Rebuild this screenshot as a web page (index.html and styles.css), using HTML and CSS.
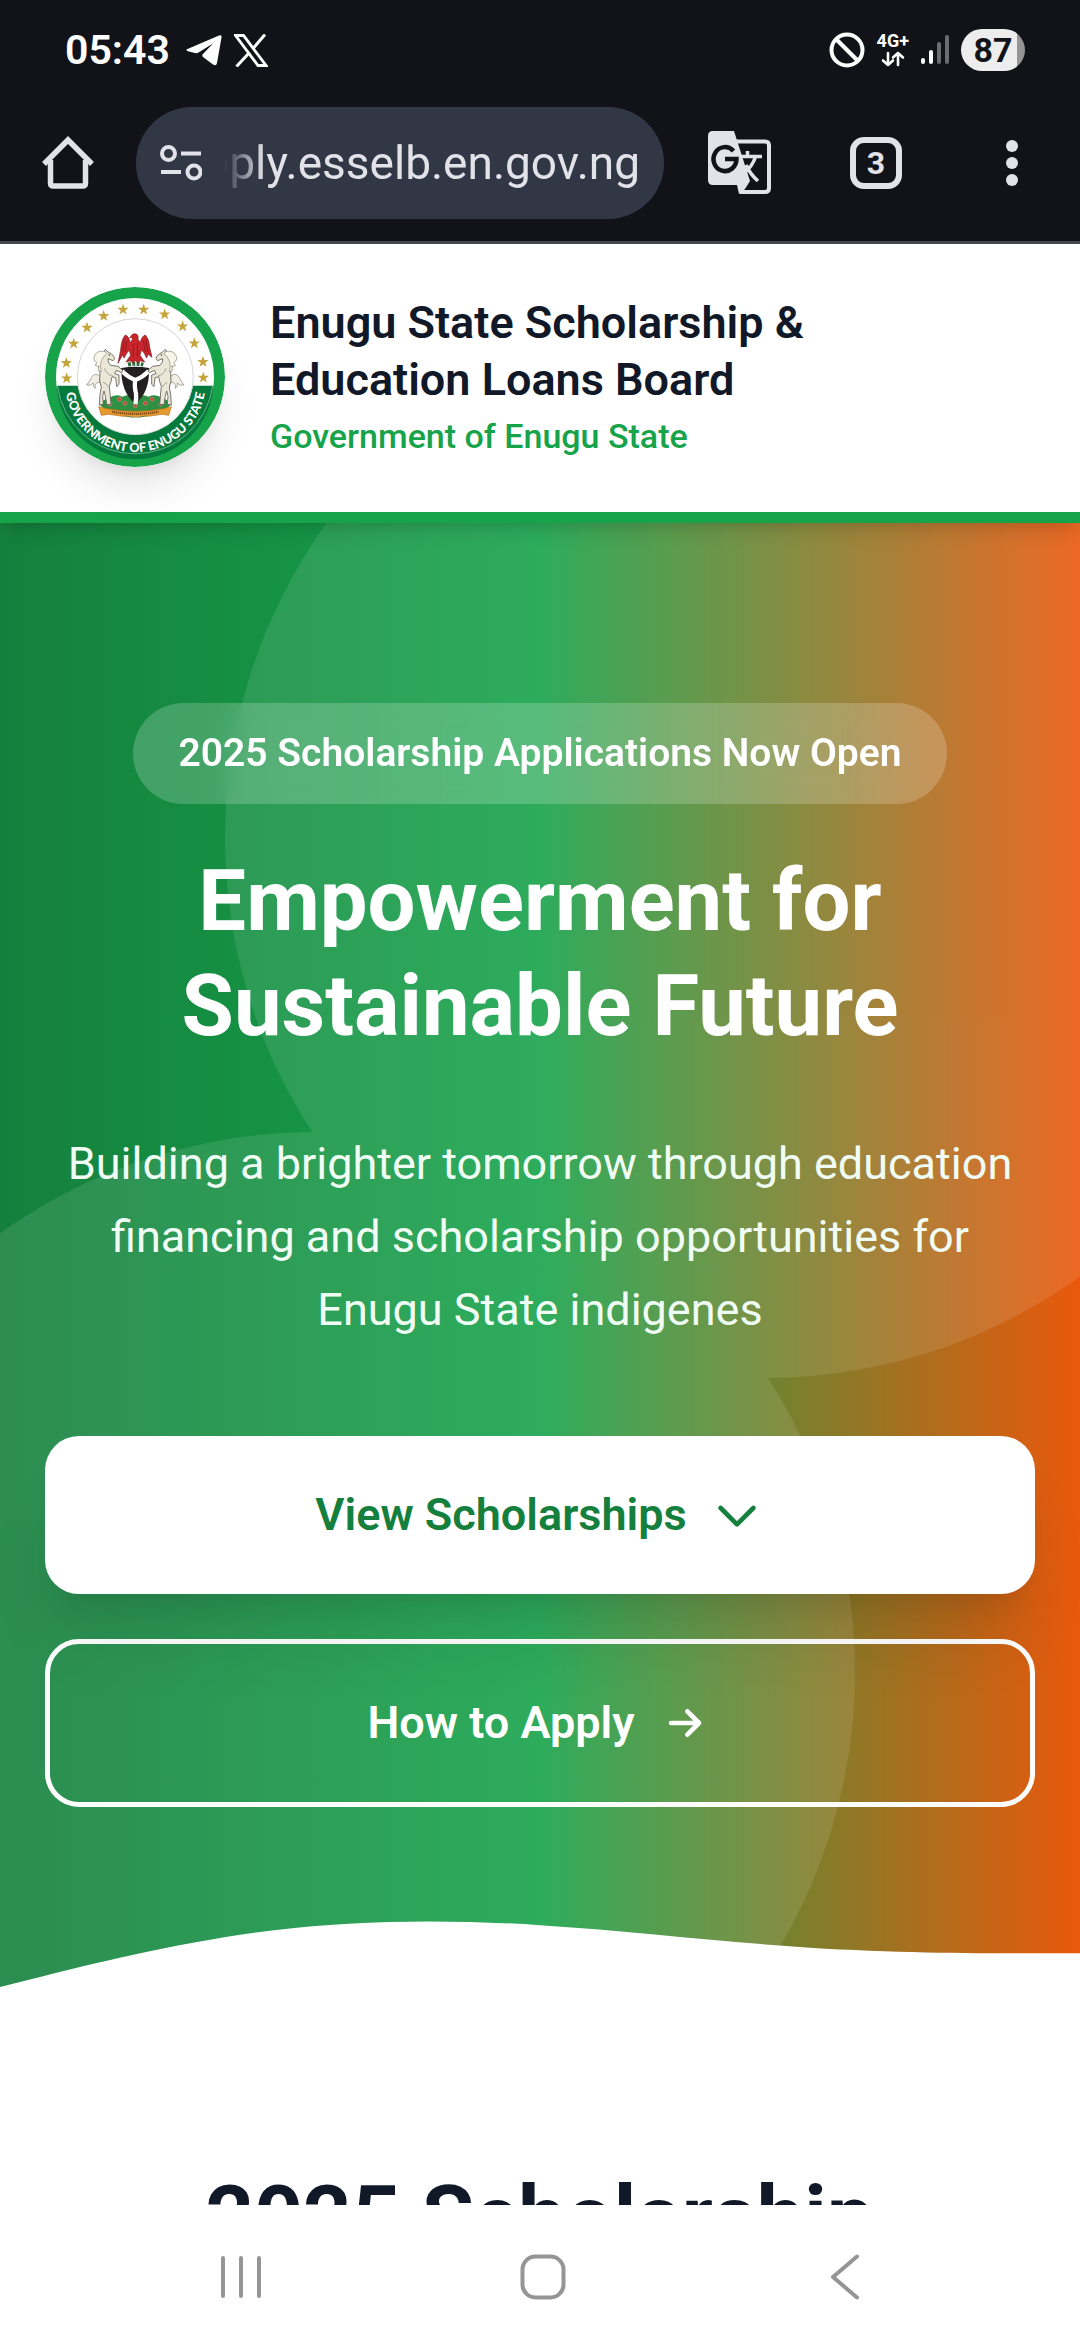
FILE: index.html
```html
<!DOCTYPE html>
<html lang="en">
<head>
    <title>Enugu State Scholarship &amp; Education Loans Board</title>
    <meta charset="utf-8">
    <meta name="viewport" content="width=device-width, initial-scale=1">

    <link rel="stylesheet" href="styles.css">
</head>

<body>

    <!-- Status bar -->
    <div class="status-bar">
        <div class="status-left">
            <span class="clock">05:43</span>
            <svg class="telegram" viewBox="0 0 36 32" width="36" height="32">
                <path d="M1.500 15 33 1.500Q36 .5 35.500 3.500L31 29Q30.200 32.500 27 30.500L17 23Q15.500 21.500 17 20L27 9.500 12.500 18.500Q11 19.500 9 19L2 17.200Q-1 16 1.500 15Z" fill="#fff"/>
            </svg>
            <svg viewBox="0 0 34 33" width="34" height="33">
                <path d="M1.500 1.500H9.500L32 31.500H24Z" fill="none" stroke="#fff" stroke-width="2.800"/>
                <path d="M31 .5 19 14.500M15.500 18.500 2.500 32.500" fill="none" stroke="#fff" stroke-width="3"/>
            </svg>
        </div>
        <div class="status-right">
            <svg viewBox="0 0 36 36" width="36" height="36" fill="none" stroke="#fff" stroke-width="4">
                <circle cx="18" cy="18" r="15.500"/>
                <path d="M7 7 29 29"/>
            </svg>
            <div class="network">
                <span>4G+</span>
                <svg viewBox="0 0 26 16" width="26" height="16" fill="none" stroke="#fff" stroke-width="2.600" stroke-linecap="round" stroke-linejoin="round">
                    <path d="M8 2V14M3 9.500 8 14 13 9.500M18 14V2M13 6.500 18 2 23 6.500"/>
                </svg>
            </div>
            <svg viewBox="0 0 28 30" width="28" height="30" stroke-width="4" stroke-linecap="round">
                <path d="M2 25V27M10 17V27" stroke="#fff"/>
                <path d="M18 9V27M26 2V27" stroke="#6c6d71"/>
            </svg>
            <span class="battery">87</span>
        </div>
    </div>

    <!-- Browser toolbar -->
    <div class="toolbar">
        <button class="tool home" aria-label="Home">
            <svg viewBox="0 0 52 54" width="52" height="54" fill="none" stroke="#e2e2e9" stroke-width="5.500" stroke-linejoin="round">
                <path d="M2 28 26 4 50 28" stroke-linejoin="miter"/>
                <path d="M8.500 24V47Q8.500 50 11.500 50H40.500Q43.500 50 43.500 47V24"/>
            </svg>
        </button>
        <div class="address">
            <svg viewBox="0 0 42 38" width="42" height="38" fill="none" stroke="#e2e2e9" stroke-width="4">
                <circle cx="8.500" cy="9.500" r="6.500"/>
                <circle cx="34" cy="28" r="6.500"/>
                <path d="M21 9.500H41M1 28H21"/>
            </svg>
            <input type="text" class="url" aria-label="Address" value="apply.esselb.en.gov.ng">
        </div>
        <button class="tool" aria-label="Translate">
            <svg viewBox="0 0 64 64" width="64" height="64">
                <path d="M28 10.500H57Q61 10.500 61 14.500V57Q61 61 57 61H32" fill="none" stroke="#e2e2e9" stroke-width="4"/>
                <path d="M5 0H26L42 50 37 58 31 63 29 54H5Q0 54 0 49V5Q0 0 5 0Z" fill="#e2e2e9"/>
                <path d="M25.500 20A11.500 12 0 1 0 28.500 28H17" fill="none" stroke="#121318" stroke-width="4.500"/>
                <path d="M39.500 20V25M32 25.500H54M47.500 26Q44 36 36 42M38 34Q42 43 50 50" fill="none" stroke="#e2e2e9" stroke-width="3.500"/>
            </svg>
        </button>
        <button class="tool" aria-label="Open tabs"><span class="tab-count">3</span></button>
        <button class="tool" aria-label="Menu">
            <svg viewBox="0 0 12 48" width="12" height="48" fill="#e2e2e9">
                <circle cx="6" cy="7" r="6"/>
                <circle cx="6" cy="24" r="6"/>
                <circle cx="6" cy="41" r="6"/>
            </svg>
        </button>
    </div>

    <!-- Web page -->
    <div class="page">
        <header class="site-header">
            <svg class="logo" viewBox="45 51 540 540" role="img" aria-label="Government of Enugu State">
                <defs>
                    <path id="ring" d="M105 335A211 211 0 0 0 527 335"/>
                    <path id="star" d="M0-18 4.200-5.800 17.100-5.600 6.800 2.200 10.600 14.600 0 7.200-10.600 14.600-6.800 2.200-17.100-5.600-4.200-5.800Z"/>
                    <g id="horse" transform="translate(150 165)">
                        <path d="M60 152Q42 142 34 158 30 168 20 180 32 184 40 174 38 186 46 190 42 172 60 172Z" fill="#f1eee3" stroke="#8b8778" stroke-width="2"/>
                        <path d="M72 82Q74 76 76 73L84 81Q96 86 101 94L104 101 99 107 84 101Q82 112 92 121L114 124 128 136 124 143 109 136 104 146 117 150 117 178 110 185 107 158 96 155Q94 170 88 184L90 204 93 238 80 239 76 212 72 198 68 214 70 238 58 240 60 208 64 186Q56 170 60 148 62 132 52 118 46 94 72 82Z" fill="#eae6d8" stroke="#5f5c52" stroke-width="2.500" stroke-linejoin="round"/>
                        <path d="M76 80Q52 74 44 92 38 106 50 112L46 122 57 124 54 136 64 140Q58 118 66 104 70 92 80 88Z" fill="#f8f5ea" stroke="#8b8778" stroke-width="2"/>
                        <circle cx="88" cy="90" r="2.500" fill="#444"/>
                        <path d="M74 130Q80 150 98 152M70 172Q80 176 86 186" fill="none" stroke="#aaa491" stroke-width="3"/>
                    </g>
                </defs>
                <circle cx="315" cy="321" r="270" fill="#16a34a"/>
                <circle cx="315" cy="321" r="237" fill="#fff"/>
                <path d="M79.500 347H550.500A236 236 0 0 1 79.500 347Z" fill="#047a3c"/>
                <path d="M82 347A235 235 0 0 0 548 347" fill="none" stroke="#9ad1b0" stroke-width="2"/>
                <circle cx="316" cy="320" r="174" fill="#fff" stroke="#d5d5d5" stroke-width="3"/>
                <g fill="#c5a43c">
                    <use href="#star" x="110" y="325"/>
                    <use href="#star" x="109" y="279"/>
                    <use href="#star" x="131" y="221"/>
                    <use href="#star" x="171" y="173"/>
                    <use href="#star" x="221" y="138"/>
                    <use href="#star" x="279" y="119"/>
                    <use href="#star" x="341" y="119"/>
                    <use href="#star" x="404" y="133"/>
                    <use href="#star" x="458" y="169"/>
                    <use href="#star" x="493" y="220"/>
                    <use href="#star" x="519" y="276"/>
                    <use href="#star" x="520" y="323"/>
                </g>
                <text class="logo-text"><textPath href="#ring" startOffset="50%">GOVERNMENT OF ENUGU STATE</textPath></text>

                <!-- Coat of arms -->
                <path d="M209 404Q215 390 236 384 258 370 276 380 316 366 356 380 376 370 396 384 418 390 423 404L400 424Q316 450 232 424Z" fill="#2f8f43"/>
                <path d="M206 410 232 416Q316 432 400 416L424 410 416 436 396 433Q316 448 236 433L214 436Z" fill="#e79a2c" stroke="#b86d1b" stroke-width="2"/>
                <path d="M246 425Q316 438 386 425" fill="none" stroke="#8a4d16" stroke-width="7" stroke-dasharray="4 2"/>
                <path d="M284 436Q316 448 350 436L340 441Q316 444 294 441Z" fill="#2f8f43"/>
                <g fill="#c9463c" stroke="#f0c9a0" stroke-width="1">
                    <circle cx="240" cy="402" r="6"/>
                    <circle cx="268" cy="388" r="6"/>
                    <circle cx="284" cy="400" r="6"/>
                    <circle cx="316" cy="408" r="5"/>
                    <circle cx="346" cy="400" r="6"/>
                    <circle cx="366" cy="388" r="6"/>
                    <circle cx="392" cy="402" r="6"/>
                </g>
                <path d="M274 294Q316 286 357 294 360 366 316 402 272 366 274 294Z" fill="#211f20"/>
                <path d="M276 303Q294 322 316 330 338 322 356 303M316 326Q312 350 318 370 320 386 316 402" fill="none" stroke="#fff" stroke-width="13"/>
                <use href="#horse"/>
                <use href="#horse" transform="translate(632 0) scale(-1 1)"/>
                <path d="M294 284Q316 278 340 284" fill="none" stroke="#2f6b3d" stroke-width="12" stroke-dasharray="9 4"/>
                <path d="M306 194Q314 188 322 194 326 200 324 208L331 218Q334 200 346 195 358 208 359 232L366 262 354 252 350 264 342 248 334 240 330 256 344 276 332 272 324 278 316 272 308 278 300 272 288 276 302 256 298 240 290 250 282 264 278 254 264 280 272 240Q274 208 286 195 298 200 300 218L308 208 304 202 299 204Z" fill="#c9252c" stroke="#7d1519" stroke-width="2"/>
                <path d="M284 208 278 246M291 212 286 246M347 208 354 246M340 212 346 246M310 220V262M322 220V262" fill="none" stroke="#7d1519" stroke-width="2"/>
            </svg>
            <div class="brand">
                <p class="brand-name">Enugu State Scholarship &amp;<br>Education Loans Board</p>
                <p class="brand-sub">Government of Enugu State</p>
            </div>
        </header>

        <section class="hero">
            <div class="circles">
                <div class="circle circle-top"></div>
                <div class="circle circle-bottom"></div>
            </div>
            <div class="hero-content">
                <span class="badge">2025 Scholarship Applications Now Open</span>
                <h1>Empowerment for Sustainable Future</h1>
                <p class="lead">Building a brighter tomorrow through education financing and scholarship opportunities for Enugu State indigenes</p>
                <a href="#scholarships" class="btn btn-white">
                    View Scholarships
                    <svg viewBox="0 0 24 24" width="56" height="56" fill="none" stroke="currentColor" stroke-width="2" stroke-linecap="round" stroke-linejoin="round">
                        <path d="M19 9l-7 7-7-7"/>
                    </svg>
                </a>
                <a href="#apply" class="btn btn-outline">
                    How to Apply
                    <svg viewBox="0 0 24 24" width="56" height="56" fill="none" stroke="currentColor" stroke-width="2" stroke-linecap="round" stroke-linejoin="round">
                        <path d="M13 7l5 5m0 0l-5 5m5-5H6"/>
                    </svg>
                </a>
            </div>
            <svg class="wave" viewBox="0 0 1440 120">
                <path d="M0 120L60 105C120 90 240 60 360 45C480 30 600 30 720 37.500C840 45 960 60 1080 67.500C1200 75 1320 75 1380 75L1440 75V120H0Z" fill="#fff"/>
            </svg>
        </section>

        <section class="scholarships" id="scholarships">
            <h2>2025 Scholarship</h2>
        </section>
    </div>

    <!-- System navigation -->
    <nav class="nav-bar">
        <button aria-label="Recent apps">
            <svg viewBox="0 0 42 44" width="42" height="44" stroke="#959595" stroke-width="4" stroke-linecap="round">
                <path d="M3 3V41M21 3V41M39 3V41"/>
            </svg>
        </button>
        <button aria-label="Home screen">
            <svg viewBox="0 0 46 46" width="46" height="46" fill="none" stroke="#959595" stroke-width="4">
                <rect x="2.500" y="2.500" width="41" height="41" rx="13"/>
            </svg>
        </button>
        <button aria-label="Back">
            <svg viewBox="0 0 30 46" width="30" height="46" fill="none" stroke="#959595" stroke-width="4" stroke-linecap="round" stroke-linejoin="round">
                <path d="M27 2.500 3 23 27 43.500"/>
            </svg>
        </button>
    </nav>

</body>
</html>
```

FILE: styles.css
```css
* {
    box-sizing: border-box;
}

body {
    margin: 0;
    height: 100vh;
    display: flex;
    flex-direction: column;
    overflow: hidden;
    font-family: Roboto, sans-serif;
    background-color: white;
}

svg {
    display: block;
    flex-shrink: 0;
}

button {
    border: none;
    padding: 0;
    background: none;
}

h1, h2, p {
    margin: 0;
}

/* Status bar */
.status-bar {
    height: 85px;
    padding: 15px 55px 0 65px;
    display: flex;
    align-items: center;
    justify-content: space-between;
    background-color: #121318;
    color: white;
}

.status-left, .status-right {
    display: flex;
    align-items: center;
    gap: 12px;
}

.clock {
    font-size: 41px;
    font-weight: 600;
    margin-right: 4px;
}

.network {
    display: flex;
    flex-direction: column;
    align-items: center;
    gap: 2px;
    font-size: 18px;
    line-height: 16px;
    font-weight: 700;
}

.battery {
    width: 64px;
    height: 42px;
    border-radius: 21px;
    background: linear-gradient(to right, #ededed 87%, #959595 87%);
    color: #121318;
    font-size: 34px;
    line-height: 42px;
    font-weight: 700;
    text-align: center;
}

/* Browser toolbar */
.toolbar {
    height: 159px;
    display: flex;
    align-items: center;
    background-color: #121318;
    border-bottom: 3px solid #45464f;
}

.tool {
    width: 136px;
    height: 112px;
    display: flex;
    align-items: center;
    justify-content: center;
}

.address {
    flex: 1;
    min-width: 0;
    height: 112px;
    margin-right: 8px;
    padding: 0 24px;
    display: flex;
    align-items: center;
    gap: 22px;
    border-radius: 56px;
    background-color: #323746;
}

.url {
    flex: 1;
    min-width: 0;
    border: none;
    padding: 0;
    outline: none;
    background: none;
    color: #e2e2e9;
    font-family: Roboto, sans-serif;
    font-size: 46px;
    direction: rtl;
    -webkit-mask-image: linear-gradient(to right, transparent, black 40px);
    mask-image: linear-gradient(to right, transparent, black 40px);
}

.tab-count {
    width: 52px;
    height: 52px;
    border: 6px solid #e2e2e9;
    border-radius: 14px;
    color: #e2e2e9;
    font-family: Roboto, sans-serif;
    font-size: 32px;
    line-height: 40px;
    font-weight: 700;
}

/* Web page */
.page {
    flex: 1;
    min-height: 0;
    overflow: hidden;
}

.site-header {
    position: relative;
    z-index: 2;
    display: flex;
    align-items: center;
    gap: 45px;
    padding: 43px 45px 45px;
    background-color: white;
    border-bottom: 11px solid #16a34a;
    box-shadow: 0 11px 17px -3px rgba(0, 0, 0, 0.1), 0 6px 11px -6px rgba(0, 0, 0, 0.1);
}

.logo {
    width: 180px;
    height: 180px;
    border-radius: 50%;
    box-shadow: 0 28px 42px -8px rgba(0, 0, 0, 0.1), 0 11px 17px -11px rgba(0, 0, 0, 0.1);
}

.logo-text {
    fill: white;
    font-family: Lato, sans-serif;
    font-size: 38px;
    font-weight: 900;
    text-anchor: middle;
}

.brand-name {
    color: #111827;
    font-size: 45px;
    line-height: 57px;
    font-weight: 600;
}

.brand-sub {
    margin-top: 4px;
    color: #16a34a;
    font-size: 34px;
    line-height: 48px;
    font-weight: 500;
}

/* Hero */
.hero {
    position: relative;
    overflow: hidden;
    background: linear-gradient(to right, #15803d, #16a34a 50%, #ea580c);
}

.circles {
    position: absolute;
    inset: 0;
    opacity: 0.1;
}

.circle {
    position: absolute;
    width: 1080px;
    height: 1080px;
    border-radius: 50%;
    background-color: white;
}

.circle-top {
    top: -225px;
    right: -225px;
}

.circle-bottom {
    bottom: -225px;
    left: -225px;
}

.hero-content {
    position: relative;
    display: flex;
    flex-direction: column;
    align-items: center;
    padding: 180px 45px;
    color: white;
    text-align: center;
}

.badge {
    padding: 22px 45px;
    border-radius: 51px;
    background-color: rgba(255, 255, 255, 0.2);
    backdrop-filter: blur(11px);
    font-size: 39px;
    line-height: 57px;
    font-weight: 600;
}

h1 {
    margin-top: 45px;
    max-width: 800px;
    font-size: 85px;
    line-height: 105px;
    font-weight: 700;
}

.lead {
    margin-top: 68px;
    color: #f0fdf4;
    font-size: 45px;
    line-height: 73px;
}

.btn {
    width: 100%;
    display: flex;
    align-items: center;
    justify-content: center;
    gap: 22px;
    padding: 45px;
    border-radius: 34px;
    font-size: 45px;
    line-height: 68px;
    font-weight: 600;
    text-decoration: none;
}

.btn-white {
    position: relative;
    z-index: 1;
    margin-top: 90px;
    background-color: white;
    color: #15803d;
    box-shadow: 0 56px 70px -14px rgba(0, 0, 0, 0.1), 0 22px 28px -17px rgba(0, 0, 0, 0.1);
}

.btn-outline {
    margin-top: 45px;
    border: 5px solid white;
    color: white;
}

.wave {
    position: absolute;
    bottom: 0;
    left: 0;
    width: 100%;
}

.scholarships {
    padding: 180px 45px;
    background-color: white;
}

h2 {
    color: #111827;
    font-size: 85px;
    line-height: 101px;
    font-weight: 700;
    text-align: center;
}

/* System navigation */
.nav-bar {
    height: 135px;
    padding: 8px 84px 0 90px;
    display: flex;
    align-items: center;
    background-color: white;
}

.nav-bar button {
    flex: 1;
    height: 100px;
    display: flex;
    align-items: center;
    justify-content: center;
}
```
